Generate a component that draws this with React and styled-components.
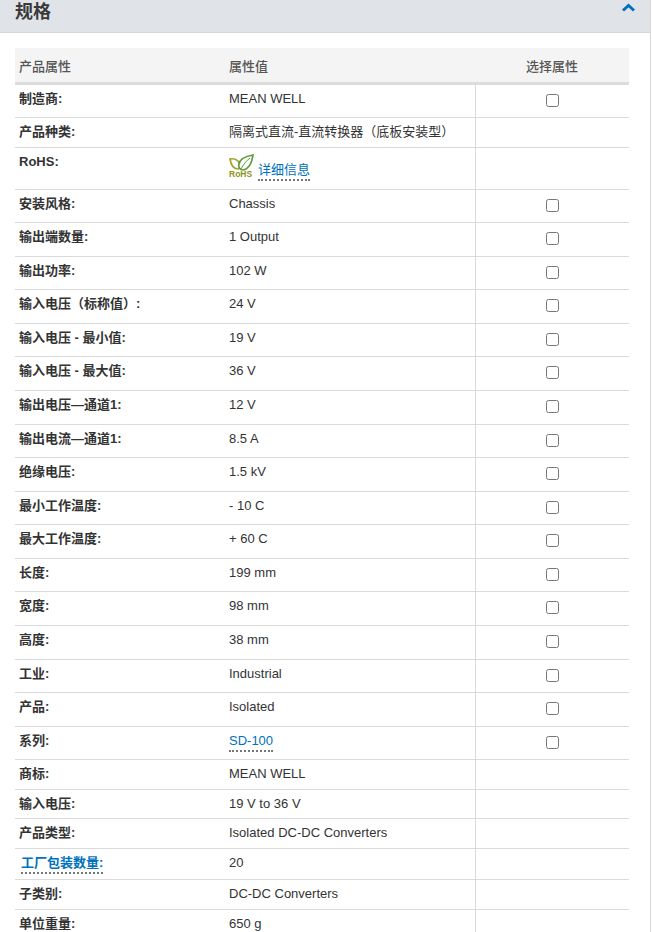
import React from "react";
import styled, { createGlobalStyle } from "styled-components";

const GlobalStyle = createGlobalStyle`
  html, body {
    margin: 0;
    padding: 0;
    background: #fff;
    overflow: hidden;
  }
  body {
    font-family: "Liberation Sans", "Noto Sans CJK SC", sans-serif;
    font-size: 13px;
    color: #333;
  }
`;

const Page = styled.div`
  width: 651px;
  height: 932px;
  overflow: hidden;
  box-sizing: border-box;
  border-right: 1px solid #d8d8d8;
`;

const SectionBar = styled.div`
  height: 33px;
  box-sizing: border-box;
  padding: 0 15px;
  display: flex;
  justify-content: space-between;
  background: #e0e3e8;
  border-bottom: 1px solid #d5d7da;
`;

const Title = styled.h2`
  margin: 0;
  font-size: 18px;
  line-height: 24px;
  font-weight: 700;
  color: #3a3a3a;
`;

const Chevron = styled.svg`
  width: 14px;
  height: 10px;
  margin: 2px 0 0 0;
  fill: none;
  stroke: #0071bc;
  stroke-width: 3;
`;

const SpecTable = styled.div`
  margin: 15px 21px 0 15px;
`;

const Columns = styled.div`
  display: grid;
  grid-template-columns: 210px 250px 1fr;
`;

const HeadRow = styled(Columns)`
  height: 37px;
  box-sizing: border-box;
  background: #f4f4f4;
  border-bottom: 3px solid #dcdcdc;
  color: #555;
  font-weight: 500;
  line-height: 37px;
`;

const HeadCell = styled.div`
  padding-left: ${(p) => (p.$center ? 0 : 4)}px;
  text-align: ${(p) => (p.$center ? "center" : "left")};
`;

const Row = styled(Columns)`
  height: ${(p) => p.$height}px;
  box-sizing: border-box;
  border-bottom: 1px solid #dadada;
  line-height: 20px;
`;

const Label = styled.div`
  padding: 4px 0 0 4px;
  font-weight: 700;
`;

const Value = styled.div`
  padding: 4px 0 0 4px;
`;

const CheckCell = styled.div`
  border-left: 1px solid #dadada;
  display: flex;
  justify-content: center;
  align-items: flex-start;
  padding-top: 9px;
`;

const Check = styled.input.attrs({ type: "checkbox" })`
  width: 13px;
  height: 13px;
  margin: 0;
`;

const InfoLink = styled.a`
  color: #0071bc;
  border-bottom: 2px dotted #777;
  font-weight: ${(p) => (p.$bold ? 700 : 400)};
  margin-left: ${(p) => (p.$bold ? 2 : 0)}px;
  padding-bottom: 2px;
  cursor: pointer;
`;

const RohsValue = styled(Value)`
  display: flex;
  align-items: flex-start;
  gap: 4px;
  padding-top: 6px;
`;

const RohsLink = styled.span`
  margin-top: 6px;
  line-height: 20px;
`;

// the attribute rows do not land on whole pixels in the original page
const STEP = 33.57;

const rows = [
  { label: "制造商:", value: "MEAN WELL", height: 33, check: true },
  { label: "产品种类:", value: "隔离式直流-直流转换器（底板安装型）", height: 30 },
  { label: "RoHS:", rohs: true, height: 41.65 },
  { label: "安装风格:", value: "Chassis", height: STEP, check: true },
  { label: "输出端数量:", value: "1 Output", height: STEP, check: true },
  { label: "输出功率:", value: "102 W", height: STEP, check: true },
  { label: "输入电压（标称值）:", value: "24 V", height: STEP, check: true },
  { label: "输入电压 - 最小值:", value: "19 V", height: STEP, check: true },
  { label: "输入电压 - 最大值:", value: "36 V", height: STEP, check: true },
  { label: "输出电压—通道1:", value: "12 V", height: STEP, check: true },
  { label: "输出电流—通道1:", value: "8.5 A", height: STEP, check: true },
  { label: "绝缘电压:", value: "1.5 kV", height: STEP, check: true },
  { label: "最小工作温度:", value: "- 10 C", height: STEP, check: true },
  { label: "最大工作温度:", value: "+ 60 C", height: STEP, check: true },
  { label: "长度:", value: "199 mm", height: STEP, check: true },
  { label: "宽度:", value: "98 mm", height: STEP, check: true },
  { label: "高度:", value: "38 mm", height: STEP, check: true },
  { label: "工业:", value: "Industrial", height: STEP, check: true },
  { label: "产品:", value: "Isolated", height: STEP, check: true },
  { label: "系列:", value: "SD-100", link: true, height: STEP, check: true },
  { label: "商标:", value: "MEAN WELL", height: 30 },
  { label: "输入电压:", value: "19 V to 36 V", height: 29 },
  { label: "产品类型:", value: "Isolated DC-DC Converters", height: 29.5 },
  { label: "工厂包装数量:", labelLink: true, value: "20", height: 31 },
  { label: "子类别:", value: "DC-DC Converters", height: 30 },
  { label: "单位重量:", value: "650 g", height: 30 },
];

const RohsLogo = () => (
  <svg width="25" height="24" viewBox="0 0 25 24">
    <path d="M1 5 C5 4 9 6 11 10 C12 12 11 15 9 15 C5 15 2 11 1 5 Z" fill="none" stroke="#a3a32a" strokeWidth="1.7" />
    <path d="M24 1 C18 2 11 4 10 10 C9 13 11 16 14 16 C20 15 23 8 24 1 Z" fill="#fff" stroke="#5f9c3c" strokeWidth="1.7" />
    <path d="M12 15 C14 11 17 7 21 4" fill="none" stroke="#5f9c3c" strokeWidth="1" />
    <text x="0" y="23" fontFamily="Liberation Sans" fontSize="8.5" fontWeight="700" fill="#8a9320">RoHS</text>
  </svg>
);

const App = () => (
  <Page>
    <GlobalStyle />
    <SectionBar>
      <Title>规格</Title>
      <Chevron viewBox="0 0 14 10">
        <polyline points="2,8.5 7.5,3.5 13,8.5" />
      </Chevron>
    </SectionBar>
    <SpecTable>
      <HeadRow>
        <HeadCell>产品属性</HeadCell>
        <HeadCell>属性值</HeadCell>
        <HeadCell $center>选择属性</HeadCell>
      </HeadRow>
      {rows.map((r) => (
        <Row key={r.label} $height={r.height}>
          <Label>
            {r.labelLink ? <InfoLink $bold>{r.label}</InfoLink> : r.label}
          </Label>
          {r.rohs ? (
            <RohsValue>
              <RohsLogo />
              <RohsLink>
                <InfoLink>详细信息</InfoLink>
              </RohsLink>
            </RohsValue>
          ) : (
            <Value>{r.link ? <InfoLink>{r.value}</InfoLink> : r.value}</Value>
          )}
          <CheckCell>{r.check && <Check />}</CheckCell>
        </Row>
      ))}
    </SpecTable>
  </Page>
);

export default App;
